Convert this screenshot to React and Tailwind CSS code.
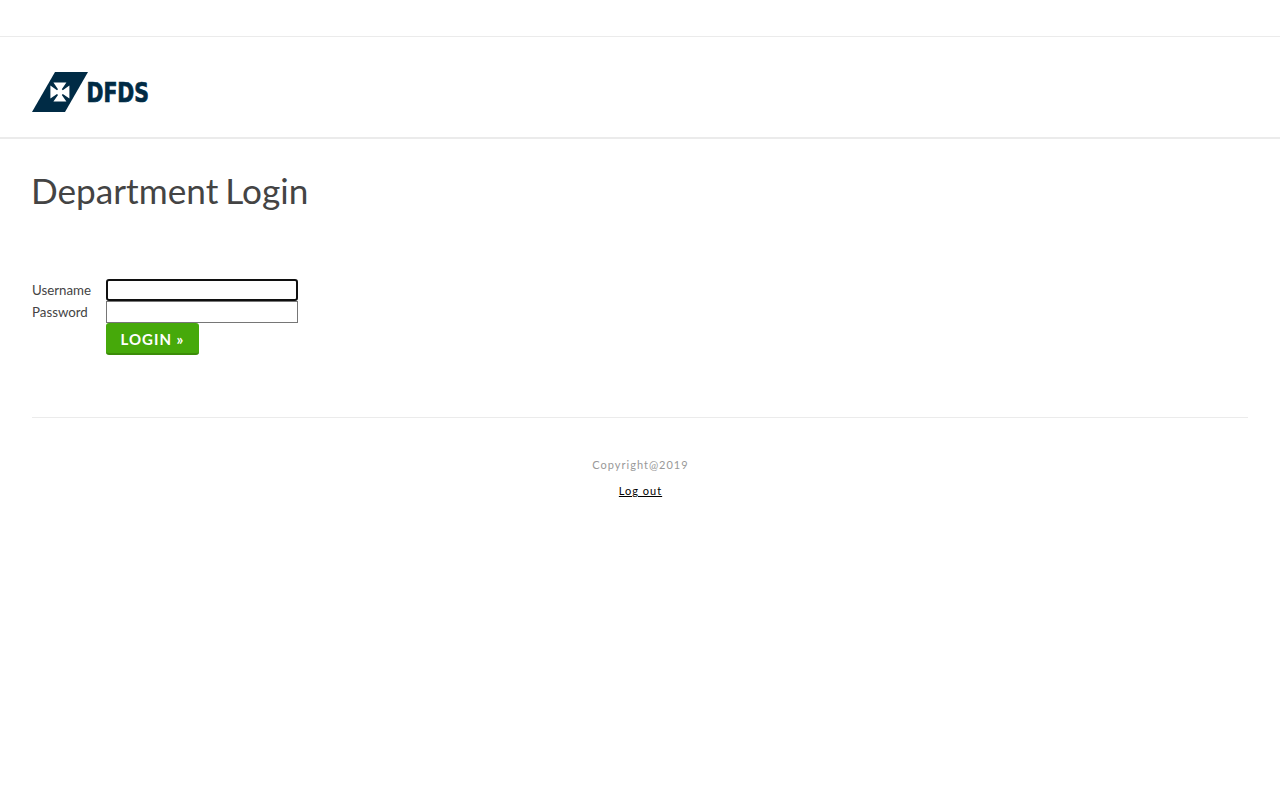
import React from 'react';

const Logo = () => (
  <svg width="120" height="40" viewBox="0 0 120 40" role="img" aria-label="DFDS" className="block overflow-visible">
    <path d="M23 0H56L33 40H0Z" fill="#002b45" />
    {/* Maltese cross */}
    <path
      d="M21.4 10.6H34.4L29.8 17.2L30.8 18.2L37.4 13.6V26.6L30.8 22L29.8 23L34.4 29.6H21.4L26 23L25 22L18.4 26.6V13.6L25 18.2L26 17.2Z"
      fill="#fff"
    />
    <text
      x="54.5"
      y="29.5"
      textLength="62.5"
      lengthAdjust="spacingAndGlyphs"
      fill="#002b45"
      stroke="#002b45"
      strokeWidth="0.7"
      className="font-['DejaVu_Sans_Condensed','DejaVu_Sans',sans-serif] text-[26px] font-bold"
    >
      DFDS
    </text>
  </svg>
);

const Field = ({ label, name, type, focused }) => (
  <div className="flex h-[22px] items-center">
    <label htmlFor={name} className="w-[74px] text-[13.3px] leading-[22px]">
      {label}
    </label>
    <input
      id={name}
      name={name}
      type={type}
      className={
        focused
          ? 'h-[22px] w-48 rounded-[3px] border-2 border-[#101010] bg-white px-1 text-[13px] caret-transparent outline-none'
          : 'h-[22px] w-48 border border-[#767676] bg-white px-1 text-[13px] outline-none'
      }
    />
  </div>
);

const App = () => {
  return (
    <div className="min-h-screen bg-white font-['Lato',sans-serif] text-[#444]">
      <div className="h-[37px] border-b border-[#ebebeb]"></div>

      <header className="h-[102px] border-b-2 border-[#ebebeb] px-8 pt-[35px]">
        <Logo />
      </header>

      <main className="mx-8 h-[279px] border-b border-[#ebebeb] pt-[29px]">
        <h1 className="-ml-px text-[35.2px] leading-[44px] [word-spacing:-2px]">Department Login</h1>

        <form className="mt-[67px]" onSubmit={(e) => e.preventDefault()}>
          <Field label="Username" name="username" type="text" focused />
          <Field label="Password" name="password" type="password" />
          <button
            type="submit"
            className="ml-[74px] block h-8 w-[93px] rounded-[3px] border-b-2 border-[#3b8c08] bg-[#46a90a] pt-px text-[15px] leading-[31px] font-bold tracking-[1px] whitespace-nowrap text-white"
          >
            LOGIN »
          </button>
        </form>
      </main>

      <footer className="pt-[34px] pl-px text-center text-[11px] leading-[26px] tracking-[1px] text-[#999]">
        <p>Copyright@2019</p>
        <a href="#" className="text-black underline">
          Log out
        </a>
      </footer>
    </div>
  );
};

export default App;
